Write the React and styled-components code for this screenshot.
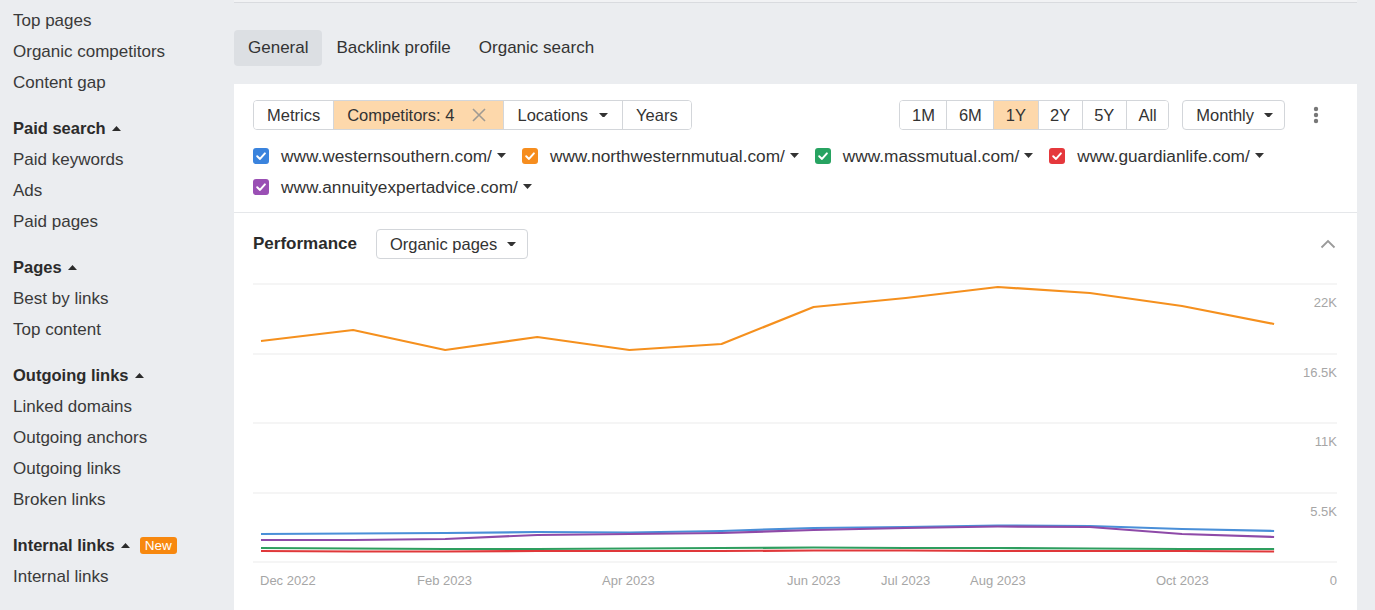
import styled, { createGlobalStyle } from "styled-components";

const GlobalStyle = createGlobalStyle`
  html, body {
    margin: 0;
    padding: 0;
    background: #ebedf0;
    font-family: "Liberation Sans", Arial, sans-serif;
    color: #333;
  }
`;

const Page = styled.div`
  display: flex;
  height: 610px;
  overflow: hidden;
`;

const Sidebar = styled.nav`
  width: 234px;
  flex-shrink: 0;
  padding: 5px 0 0 13px;
  box-sizing: border-box;
`;

const NavGroup = styled.div`
  margin-bottom: 15px;
`;

const NavHeading = styled.div`
  display: flex;
  align-items: center;
  gap: 6px;
  height: 31px;
  font-size: 16.5px;
  font-weight: bold;
  color: #2b2b2b;
`;

const NavItem = styled.div`
  height: 31px;
  line-height: 31px;
  font-size: 17px;
  color: #3a3a3a;
`;

const NewBadge = styled.span`
  margin-left: 4px;
  background: #f7880f;
  color: #fff;
  font-size: 13.5px;
  font-weight: normal;
  padding: 1px 5px;
  border-radius: 3px;
  line-height: 15px;
`;

const Main = styled.main`
  flex: 1;
  display: flex;
  flex-direction: column;
  padding-right: 18px;
`;

const TopStrip = styled.div`
  height: 2px;
  background: #f1f2f4;
  border-bottom: 1px solid #d9dbdf;
`;

const Tabs = styled.div`
  display: flex;
  margin: 27px 0 18px;
`;

const Tab = styled.div`
  height: 36px;
  line-height: 36px;
  padding: 0 14px;
  font-size: 17px;
  border-radius: 4px;
  color: #333;
  background: ${(p) => (p.$active ? "#dcdfe3" : "transparent")};
`;

const Card = styled.section`
  background: #fff;
  flex: 1;
`;

const FilterSection = styled.div`
  padding: 16px 19px 10px;
  border-bottom: 1px solid #e5e7ea;
`;

const FilterRow = styled.div`
  display: flex;
  align-items: center;
  height: 30px;
  margin-bottom: 10px;
`;

const BtnGroup = styled.div`
  display: flex;
  height: 30px;
  border: 1px solid #d3d6da;
  border-radius: 4px;
  box-sizing: border-box;
  overflow: hidden;
`;

const GroupBtn = styled.div`
  display: flex;
  align-items: center;
  gap: ${(p) => p.$gap || 0}px;
  padding: 0 ${(p) => p.$pr || 13}px 0 13px;
  font-size: 16.5px;
  color: #333;
  background: ${(p) => (p.$active ? "#fdd8ab" : "#fff")};
  & + & {
    border-left: 1px solid #d3d6da;
  }
`;

const PeriodBtn = styled(GroupBtn)`
  padding: 0 11.5px;
`;

const RightControls = styled.div`
  margin-left: auto;
  display: flex;
  align-items: center;
  gap: 13px;
`;

const Select = styled.div`
  display: flex;
  align-items: center;
  gap: 10px;
  height: 30px;
  box-sizing: border-box;
  padding: 0 11px 0 13px;
  border: 1px solid #d3d6da;
  border-radius: 4px;
  font-size: 16.5px;
  color: #333;
  background: #fff;
`;

const Kebab = styled.div`
  width: 44px;
  display: flex;
  justify-content: center;
  margin-left: -4px;
`;

const Legend = styled.div`
  display: flex;
  flex-wrap: wrap;
  column-gap: 16px;
`;

const LegendItem = styled.div`
  display: flex;
  align-items: center;
  height: 31px;
  font-size: 17.25px;
  color: #333;
`;

const LegendLabel = styled.span`
  margin: 1px 5px 0 12px;
`;

const PerfSection = styled.div`
  padding: 16px 19px 0;
`;

const PerfHeader = styled.div`
  display: flex;
  align-items: center;
  height: 30px;
`;

const PerfTitle = styled.div`
  font-size: 17px;
  font-weight: bold;
  color: #2b2b2b;
  margin-right: 19px;
`;

const Collapse = styled.div`
  margin-left: auto;
  margin-right: 2px;
  display: flex;
`;

const Chart = styled.svg`
  display: block;
  margin: 11px 0 0 -1px;
`;

const Caret = ({ up, color = "#333", w = 9 }) => (
  <svg width={w} height={w * 0.55} viewBox="0 0 10 5.5">
    <path d={up ? "M0 5.5 L5 0 L10 5.5 Z" : "M0 0 L10 0 L5 5.5 Z"} fill={color} />
  </svg>
);

const Check = ({ color }) => (
  <svg width="16" height="16" viewBox="0 0 16 16">
    <rect width="16" height="16" rx="3" fill={color} />
    <path d="M4.2 8.3 L7 10.9 L11.9 5.4" fill="none" stroke="#fff" strokeWidth="2" strokeLinecap="round" strokeLinejoin="round" />
  </svg>
);

const nav = [
  { items: ["Top pages", "Organic competitors", "Content gap"] },
  { title: "Paid search", items: ["Paid keywords", "Ads", "Paid pages"] },
  { title: "Pages", items: ["Best by links", "Top content"] },
  { title: "Outgoing links", items: ["Linked domains", "Outgoing anchors", "Outgoing links", "Broken links"] },
  { title: "Internal links", badge: "New", items: ["Internal links"] },
];

const competitors = [
  { url: "www.westernsouthern.com/", color: "#3a83dd" },
  { url: "www.northwesternmutual.com/", color: "#f68d1e" },
  { url: "www.massmutual.com/", color: "#27a361" },
  { url: "www.guardianlife.com/", color: "#e5383c" },
  { url: "www.annuityexpertadvice.com/", color: "#9a4fb4" },
];

const series = [
  { color: "#4a8fd8", ys: [534, 533.5, 533, 532, 532.5, 531, 528, 527, 525.5, 526, 529, 531] },
  { color: "#8e4aa8", ys: [540, 540, 539, 535, 534, 533, 530, 528, 526.5, 527, 534, 537] },
  { color: "#2e9e5f", ys: [548, 548.5, 549, 549, 548.5, 548, 547.5, 548, 548, 548.5, 549, 549] },
  { color: "#e0383a", ys: [551, 551.5, 551.5, 551, 551, 551, 550.5, 550.5, 551, 551, 551, 551.5] },
  { color: "#f5901e", ys: [341, 330, 350, 337, 350, 344, 307, 298, 287, 293, 306, 324] },
];

const gridY = [284, 354, 423, 493, 562];
const yLabels = ["22K", "16.5K", "11K", "5.5K", "0"];
const xLabels = [
  ["Dec 2022", 261], ["Feb 2023", 418], ["Apr 2023", 603], ["Jun 2023", 788],
  ["Jul 2023", 882], ["Aug 2023", 971], ["Oct 2023", 1157],
];

function PerformanceChart() {
  const xs = Array.from({ length: 12 }, (_, i) => 262 + i * 92.1);
  return (
    <Chart width="1085" height="340" viewBox="253 270 1085 340">
      {gridY.map((y) => (
        <line key={y} x1="254" x2="1338" y1={y} y2={y} stroke="#ebebeb" strokeWidth="1" />
      ))}
      {yLabels.map((l, i) => (
        <text key={l} x="1338" y={gridY[i] + 23} textAnchor="end" fontSize="13" fill="#a6a6a6" fontFamily="Liberation Sans, Arial, sans-serif">
          {l}
        </text>
      ))}
      {xLabels.map(([l, x]) => (
        <text key={l} x={x} y="585" fontSize="13" fill="#a6a6a6" fontFamily="Liberation Sans, Arial, sans-serif">
          {l}
        </text>
      ))}
      {series.map((s) => (
        <polyline
          key={s.color}
          points={s.ys.map((y, i) => `${xs[i]},${y}`).join(" ")}
          fill="none"
          stroke={s.color}
          strokeWidth="2.2"
          strokeLinejoin="round"
        />
      ))}
    </Chart>
  );
}

export default function App() {
  return (
    <>
      <GlobalStyle />
      <Page>
        <Sidebar>
          {nav.map((g, i) => (
            <NavGroup key={i}>
              {g.title && (
                <NavHeading>
                  {g.title}
                  <Caret up color="#2b2b2b" w={9} />
                  {g.badge && <NewBadge>{g.badge}</NewBadge>}
                </NavHeading>
              )}
              {g.items.map((it) => (
                <NavItem key={it}>{it}</NavItem>
              ))}
            </NavGroup>
          ))}
        </Sidebar>

        <Main>
          <TopStrip />
          <Tabs>
            <Tab $active>General</Tab>
            <Tab>Backlink profile</Tab>
            <Tab>Organic search</Tab>
          </Tabs>

          <Card>
            <FilterSection>
              <FilterRow>
                <BtnGroup>
                  <GroupBtn>Metrics</GroupBtn>
                  <GroupBtn $active $gap={18} $pr={17}>
                    Competitors: 4
                    <svg width="14" height="14" viewBox="0 0 14 14">
                      <path d="M1 1 L13 13 M13 1 L1 13" stroke="#a09a92" strokeWidth="1.6" />
                    </svg>
                  </GroupBtn>
                  <GroupBtn $gap={11} $pr={14}>
                    Locations
                    <Caret />
                  </GroupBtn>
                  <GroupBtn>Years</GroupBtn>
                </BtnGroup>

                <RightControls>
                  <BtnGroup>
                    {["1M", "6M", "1Y", "2Y", "5Y", "All"].map((p) => (
                      <PeriodBtn key={p} $active={p === "1Y"}>
                        {p}
                      </PeriodBtn>
                    ))}
                  </BtnGroup>
                  <Select>
                    Monthly
                    <Caret />
                  </Select>
                  <Kebab>
                    <svg width="6" height="18" viewBox="0 0 6 18">
                      <circle cx="3" cy="3" r="2.2" fill="#777" />
                      <circle cx="3" cy="9" r="2.2" fill="#777" />
                      <circle cx="3" cy="15" r="2.2" fill="#777" />
                    </svg>
                  </Kebab>
                </RightControls>
              </FilterRow>

              <Legend>
                {competitors.map((c) => (
                  <LegendItem key={c.url}>
                    <Check color={c.color} />
                    <LegendLabel>{c.url}</LegendLabel>
                    <Caret w={9} />
                  </LegendItem>
                ))}
              </Legend>
            </FilterSection>

            <PerfSection>
              <PerfHeader>
                <PerfTitle>Performance</PerfTitle>
                <Select>
                  Organic pages
                  <Caret />
                </Select>
                <Collapse>
                  <svg width="16" height="10" viewBox="0 0 16 10">
                    <path d="M1.5 8.5 L8 2 L14.5 8.5" fill="none" stroke="#9a9a9a" strokeWidth="1.8" />
                  </svg>
                </Collapse>
              </PerfHeader>
              <PerformanceChart />
            </PerfSection>
          </Card>
        </Main>
      </Page>
    </>
  );
}
